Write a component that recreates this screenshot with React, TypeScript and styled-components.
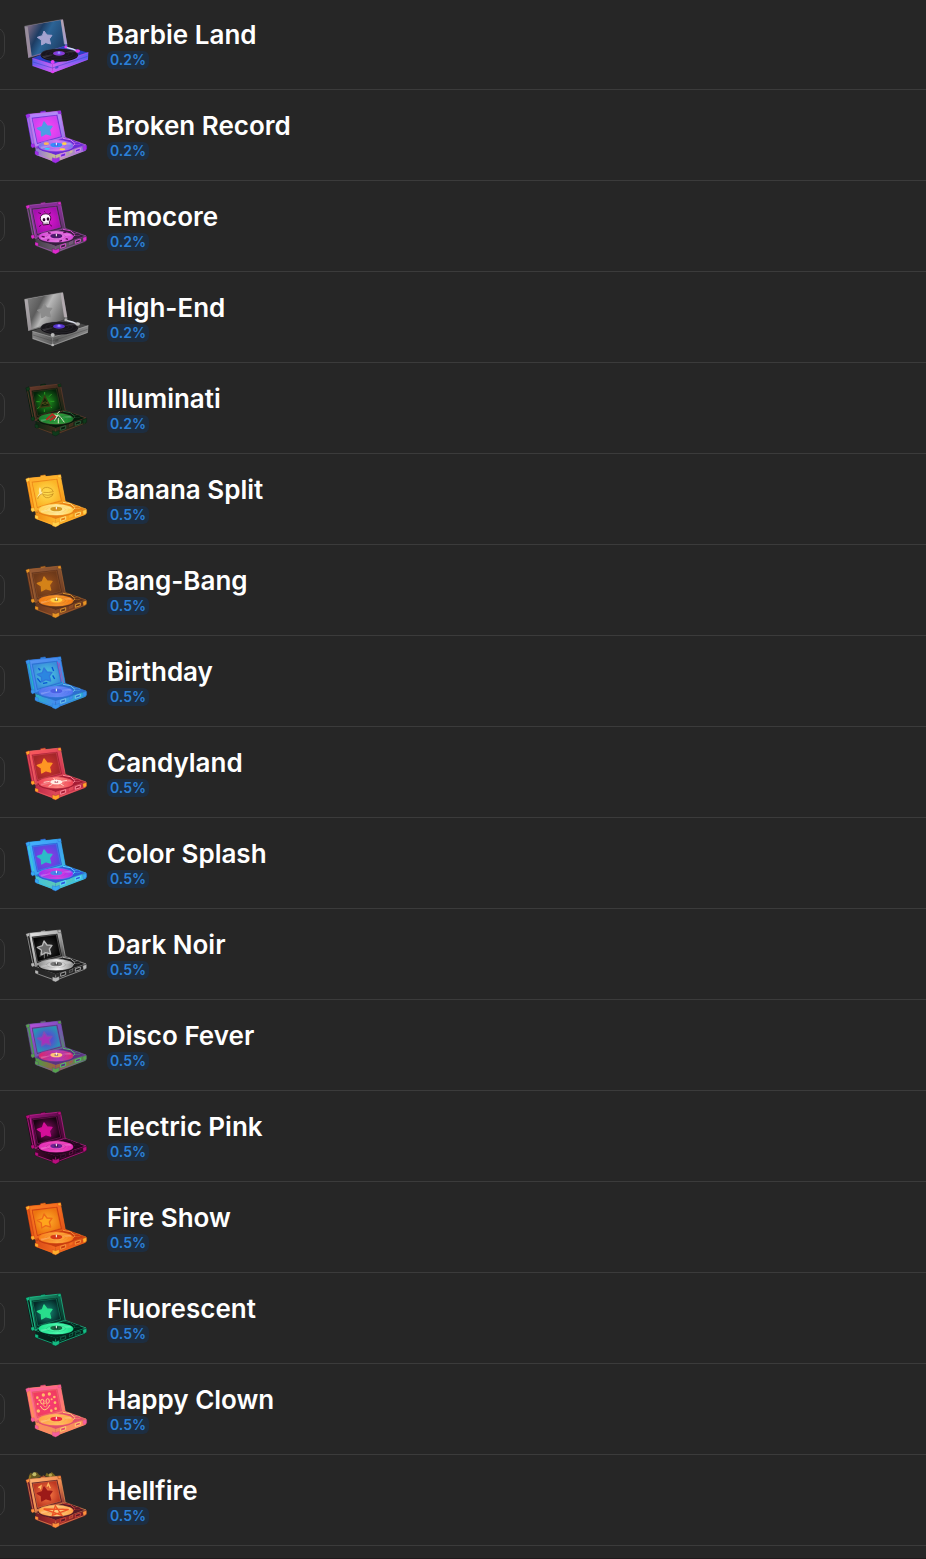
import React, { useId } from "react";
import styled, { createGlobalStyle } from "styled-components";

const GlobalStyle = createGlobalStyle`
  * { box-sizing: border-box; }
  body {
    margin: 0;
    background: #262626;
    color: #ffffff;
    font-family: Inter, "Liberation Sans", sans-serif;
  }
`;

const Panel = styled.main`
  overflow: hidden;
  padding-bottom: 12px;
  border-bottom: 1px solid #1f1a1c;
`;

const BackdropList = styled.ul`
  list-style: none;
  margin: -1px 0 0;
  padding: 0;
`;

const Row = styled.li`
  display: flex;
  align-items: center;
  height: 91px;
  border-bottom: 1px solid #3b3b3b;
`;

const Check = styled.input`
  appearance: none;
  flex: none;
  width: 34px;
  height: 34px;
  margin: 0 10px 0 -29px;
  border: 1px solid #3a3a3a;
  border-radius: 10px;
  &:checked { background: #2481e0; }
`;

const RowLabel = styled.label`
  display: flex;
  flex: 1;
  min-width: 0;
  align-items: center;
  gap: 12px;
`;

const Art = styled.svg`
  display: block;
  flex: none;
  width: 80px;
  height: 70px;
  margin-top: 2px;
`;

const Details = styled.span`
  display: flex;
  flex-direction: column;
  align-items: flex-start;
  min-width: 0;
  margin-bottom: 1px;
`;

const Name = styled.span`
  font-size: 26px;
  line-height: 32px;
  font-weight: 600;
`;

const Rarity = styled.span`
  padding: 0 3px;
  border-radius: 6px;
  background: #1d2d40;
  color: #2b80d8;
  font-size: 14px;
  line-height: 18px;
  font-weight: 600;
`;

type Motif = "star" | "outline" | "skull" | "eye" | "banana" | "clown";
type Extra = "dots" | "bones" | "flames" | "confetti" | "drip" | "candy";

interface Skin {
  frame: string;
  mid?: string;
  frame2: string;
  panel: string;
  panel2: string;
  star: string;
  disc: string;
  disc2: string;
  label: string;
  side: string;
  side2: string;
  corner: string;
  latch: string;
  edge: string;
  motif?: Motif;
  extra?: Extra;
  glass?: boolean;
}

const STAR = "M87 63L96 75L111 76L103 87L107 102L92 98L80 105L79 90L67 82L82 77Z";

function MotifArt({ skin }: { skin: Skin }) {
  switch (skin.motif) {
    case "skull":
      return (
        <g>
          <path d="M70 62l8 3M108 62l-7 4M72 104l7-5M111 103l-6-5M88 58l3 3" stroke="#51064f" strokeWidth="3" />
          <path d="M76 79C75 63 105 60 107 76C108 83 104 87 103 89L103 97L84 99L84 91C79 90 77 86 76 79Z" fill="#fff4ff" stroke="#4a0644" strokeWidth="3" />
          <ellipse cx="87" cy="83" rx="4" ry="5" fill="#280329" />
          <ellipse cx="99" cy="81" rx="4" ry="5" fill="#280329" />
          <path d="M90 92v7M96 91v7" stroke="#280329" strokeWidth="2" />
        </g>
      );
    case "eye":
      return (
        <g fill="none">
          <path d="M89 54v8M70 62l8 8M110 60l-8 8M64 83h10M106 82h12M67 104l9-7M111 102l-8-7M88 106v8" stroke="#299a22" strokeWidth="3" />
          <path d="M89 66L105 96L75 100Z" fill="#102608" stroke="#3c3a16" strokeWidth="4" />
          <path d="M82 88Q90 80 99 87Q90 95 82 88" stroke="#6b5a20" strokeWidth="2" />
        </g>
      );
    case "banana":
      return (
        <g fill="none" stroke="#bf8519" strokeWidth="2">
          <path d="M75 66Q69 74 73 85Q68 91 66 98Q76 88 83 87Z" fill="#ffeaa8" stroke="none" />
          <path d="M80 80Q82 66 98 67Q112 69 115 80Q100 84 85 82M83 86Q86 100 101 98Q114 95 115 84M83 86Q72 88 68 102M85 89Q98 93 114 88" />
        </g>
      );
    case "clown":
      return (
        <g>
          <g fill="#ffbe69">
            <circle cx="67" cy="68" r="4" /><circle cx="85" cy="60" r="5" /><circle cx="103" cy="57" r="5" />
            <circle cx="118" cy="66" r="4" /><circle cx="120" cy="83" r="4" /><circle cx="122" cy="101" r="4" />
            <circle cx="68" cy="87" r="3" /><circle cx="70" cy="108" r="5" /><circle cx="109" cy="107" r="4" />
            <circle cx="73" cy="76" r="3" /><circle cx="110" cy="73" r="3" />
          </g>
          <path d="M76 93Q89 118 105 90" fill="none" stroke="#ffd477" strokeWidth="3" />
          <ellipse cx="82" cy="80" rx="5" ry="7" fill="none" stroke="#ffd477" strokeWidth="3" />
          <ellipse cx="98" cy="78" rx="5" ry="7" fill="none" stroke="#ffd477" strokeWidth="3" />
          <circle cx="91" cy="90" r="5" fill="#f32453" stroke="#ffd477" strokeWidth="2" />
        </g>
      );
    case "outline":
      return <path d={STAR} fill={skin.star} stroke={skin.edge} strokeWidth="4" strokeLinejoin="round" />;
    default:
      return <path d={STAR} fill={skin.star} stroke={skin.star} strokeWidth="4" strokeLinejoin="round" />;
  }
}

function GlassPlayer({ skin, id }: { skin: Skin; id: string }) {
  return (
    <g>
      <path d="M28 49L144 28L158 112L40 144Z" fill={`url(#${id}f)`} />
      <path d="M38 48L137 30L150 107L50 138Z" fill={`url(#${id}p)`} />
      <path d="M29 50L38 50L50 138L40 144Z" fill="#c9bcc6" opacity=".4" />
      <path d="M137 31L144 29L157 102L147 103Z" fill="#e9d9e4" opacity=".5" />
      <path d="M29 48L143 28" stroke="#d8d0d8" opacity=".5" strokeWidth="1" />
      <path d={STAR} fill={skin.star} stroke={skin.star} strokeWidth="3" strokeLinejoin="round" />
      <path d="M52 144L148 108L220 128L113 165Z" fill={skin.frame2} />
      <path d="M52 144L113 163L113 189L52 168Z" fill={`url(#${id}s)`} />
      <path d="M113 163L220 127L219 149L113 189Z" fill={`url(#${id}t)`} />
      <path d="M52 145L113 163L220 128M54 166L113 187L217 148M113 165V187" fill="none" stroke={skin.corner} strokeWidth="2" opacity=".7" />
      <path d="M54 156L112 174L218 139" fill="none" stroke={skin.frame2} strokeWidth="2" opacity=".7" />
      <ellipse cx="133" cy="136" rx="56" ry="19" fill="#141217" />
      <ellipse cx="133" cy="133" rx="55" ry="17" fill={skin.disc} stroke="#4a454e" strokeWidth="1" />
      <ellipse cx="133" cy="132" rx="41" ry="12" fill="none" stroke={skin.disc2} strokeWidth="1" />
      <ellipse cx="133" cy="132" rx="29" ry="8" fill="none" stroke={skin.disc2} strokeWidth="1" />
      <path d="M82 138L120 132L87 145ZM145 128L180 119L186 126Z" fill="#77727a" opacity=".3" />
      <ellipse cx="132" cy="130" rx="18" ry="7" fill={skin.label} />
      <ellipse cx="132" cy="129" rx="8" ry="4" fill="#7455f7" />
      <path d="M132 125v6" stroke="#fff" strokeWidth="2" />
      <path d="M153 112L172 117L191 125" fill="none" stroke="#dce0ed" strokeWidth="4" />
      <circle cx="152" cy="111" r="4" fill={skin.corner} />
      <ellipse cx="188" cy="123" rx="7" ry="5" fill={skin.corner} />
      <ellipse cx="113" cy="156" rx="6" ry="6" fill={skin.corner} />
      <circle cx="113" cy="186" r="4" fill={skin.corner} />
      <path d="M121 170l9-3v7l-9 3z" fill={skin.frame2} opacity=".7" />
    </g>
  );
}

function CasePlayer({ skin, id }: { skin: Skin; id: string }) {
  return (
    <g>
      {skin.extra === "flames" && (
        <g>
          <path d="M41 32Q47 13 52 25Q64 11 72 26L80 31L64 37L45 41Z" fill="#665720" />
          <path d="M90 31L95 20L104 27L110 18L123 31L115 34Z" fill="#77671f" />
          <circle cx="58" cy="25" r="6" fill="#c1bc67" /><circle cx="106" cy="27" r="5" fill="#b9a54e" />
          <path d="M42 40L47 28M84 29L88 38M130 31L137 37" stroke="#987b24" strokeWidth="5" />
        </g>
      )}
      <path d="M77 39V32L91 30V37" fill={skin.corner} stroke={skin.frame2} strokeWidth="2" />
      <path d="M33 43L42 39L135 30L151 111L58 138L50 136Z" fill={skin.frame2} />
      <path d="M42 40L136 30L151 111L60 138Z" fill={`url(#${id}f)`} stroke={skin.edge} strokeWidth="2" />
      <path d="M35 45L42 41L60 136L52 134Z" fill={skin.side} />
      <path d="M37 48L54 132M44 43L61 133" stroke={skin.edge} strokeWidth="2" />
      <path d="M50 50L127 41L141 108L66 129Z" fill={skin.frame2} />
      <path d="M53 53L124 44L137 106L68 125Z" fill={`url(#${id}p)`} stroke={skin.edge} strokeWidth="1" />
      {skin.extra === "confetti" && (
        <g fill="none">
          <path d="M70 64l6 6M111 60l5 12M113 85l6 11M67 94l10 12M84 109l13-2" stroke="#0754d3" strokeWidth="4" />
          <path d="M132 47L146 108M127 44L140 104" stroke="#bb42ae" strokeWidth="2" />
        </g>
      )}
      <MotifArt skin={skin} />
      {skin.extra === "drip" && <path d="M78 96L75 110M88 95V115M97 95L98 109" stroke="#ababab" strokeWidth="2" />}
      {skin.extra === "flames" && <path d="M70 65L78 60L76 70M96 62L100 53L106 67" fill="none" stroke="#ffb65e" strokeWidth="4" />}
      <path d="M59 138L150 109L213 132L122 164Z" fill={skin.frame2} stroke={skin.edge} strokeWidth="2" />
      <path d="M61 140L122 162L121 184L63 162Z" fill={`url(#${id}s)`} />
      <path d="M122 162L213 133L212 149L121 184Z" fill={`url(#${id}t)`} />
      <path d="M63 160L121 181L211 147M122 166V181" fill="none" stroke={skin.edge} strokeWidth="2" />
      <ellipse cx="123" cy="138" rx="53" ry="18" fill={skin.frame2} />
      <ellipse cx="123" cy="134" rx="52" ry="17" fill={`url(#${id}d)`} stroke={skin.edge} strokeWidth="1" />
      <ellipse cx="123" cy="134" rx="39" ry="12" fill="none" stroke={skin.edge} opacity=".45" strokeWidth="1" />
      <ellipse cx="123" cy="134" rx="29" ry="9" fill="none" stroke={skin.frame2} opacity=".4" strokeWidth="1" />
      <path d="M76 137L111 133L80 143ZM136 130L166 125L170 131Z" fill="#fff" opacity=".22" />
      {skin.extra === "dots" && (
        <g>
          <ellipse cx="94" cy="128" rx="8" ry="4" fill="#ffb557" />
          <ellipse cx="148" cy="128" rx="7" ry="4" fill="#ffd34c" />
          <ellipse cx="97" cy="143" rx="8" ry="3" fill="#35ceff" />
          <ellipse cx="142" cy="145" rx="9" ry="3" fill="#ffd34c" />
        </g>
      )}
      {skin.extra === "bones" && <path d="M80 133l9 2M96 145l7-2M133 148l8-3M152 140l7 2M99 122l8 2M145 122l9-2" stroke="#5c0757" strokeWidth="4" />}
      {skin.extra === "candy" && <path d="M86 133L104 130M101 145L112 139M146 143L137 138M156 127L140 130M116 120L119 126" stroke="#ffd0c4" strokeWidth="3" />}
      {skin.extra !== "flames" && (
        <g>
          <ellipse cx="124" cy="132" rx="18" ry="7" fill={skin.label} />
          <ellipse cx="124" cy="132" rx="6" ry="3" fill={skin.frame2} opacity=".65" />
          <path d="M124 125v8" stroke="#fff" strokeWidth="3" />
        </g>
      )}
      {skin.extra === "flames" && <path d="M86 129L161 130L112 148L121 119L141 148Z" fill="none" stroke="#ed5324" strokeWidth="4" />}
      {skin.motif === "eye" && (
        <g fill="none">
          <path d="M94 137L112 121L121 128L104 139" stroke="#b52d22" strokeWidth="6" />
          <path d="M118 140L129 122L137 130L148 145M127 119L134 111M128 127L119 122M130 132L130 148" stroke="#d5e6bd" strokeWidth="3" />
        </g>
      )}
      <path d="M147 113L171 121L188 129" fill="none" stroke={skin.frame2} strokeWidth="8" />
      <path d="M144 112L166 116L181 128L174 134" fill="none" stroke={skin.latch} strokeWidth="3" />
      <ellipse cx="187" cy="127" rx="9" ry="4" fill={skin.frame2} stroke={skin.latch} strokeWidth="1" />
      <g fill={skin.frame2} stroke={skin.latch} strokeWidth="3">
        <path d="M137 160l15-5v9l-15 5zM181 146l15-5v8l-15 5z" />
      </g>
      <path d="M163 151l10-4v7l-10 4z" fill={skin.side2} stroke={skin.edge} strokeWidth="1" />
      <g fill={skin.corner} stroke={skin.frame2} strokeWidth="1">
        <path d="M32 42L42 38L45 46L36 52ZM128 31L137 29L139 38L130 38ZM48 130l9-2 3 9-8 4-4-5ZM60 150l10 3v10l-10-3zM112 170l10 3 11-4v11l-11 6-10-4zM203 137l12-4v12l-10 5z" />
      </g>
    </g>
  );
}

function Turntable({ skin }: { skin: Skin }) {
  const id = "t" + useId().replace(/[^a-zA-Z0-9]/g, "");
  return (
    <Art viewBox="0 0 240 210" aria-hidden="true">
      <defs>
        <linearGradient id={`${id}f`} x1="0" y1="0" x2="1" y2="1">
          <stop stopColor={skin.frame} /><stop offset=".5" stopColor={skin.mid ?? skin.side2} /><stop offset="1" stopColor={skin.side} />
        </linearGradient>
        {skin.glass ? (
          <linearGradient id={`${id}p`} x1="0" y1=".2" x2="1" y2=".7">
            <stop stopColor={skin.mid} /><stop offset=".3" stopColor={skin.panel2} /><stop offset=".5" stopColor={skin.panel} /><stop offset="1" stopColor={skin.panel2} />
          </linearGradient>
        ) : (
          <radialGradient id={`${id}p`}><stop stopColor={skin.panel} /><stop offset="1" stopColor={skin.panel2} /></radialGradient>
        )}
        <linearGradient id={`${id}s`}><stop stopColor={skin.side} /><stop offset="1" stopColor={skin.side2} /></linearGradient>
        <linearGradient id={`${id}t`}><stop stopColor={skin.side2} /><stop offset="1" stopColor={skin.side} /></linearGradient>
        <linearGradient id={`${id}d`}><stop stopColor={skin.disc} /><stop offset=".55" stopColor={skin.disc2} /><stop offset="1" stopColor={skin.disc} /></linearGradient>
      </defs>
      {skin.glass ? <GlassPlayer skin={skin} id={id} /> : <CasePlayer skin={skin} id={id} />}
    </Art>
  );
}

const models: { name: string; rarity: string; skin: Skin }[] = [
  { name: "Barbie Land", rarity: "0.2%", skin: { glass: true, frame: "#777481", mid: "#7d6a83", frame2: "#293fc4", panel: "#2c6496", panel2: "#1d3c63", star: "#a4a3d0", disc: "#19151e", disc2: "#343039", label: "#863bd4", side: "#5a5ff0", side2: "#c864f4", corner: "#e33df4", latch: "#b4caff", edge: "#737584" } },
  { name: "Broken Record", rarity: "0.2%", skin: { frame: "#b37cff", mid: "#b18cf6", frame2: "#6a2bd6", panel: "#ff46f2", panel2: "#d040f0", star: "#4c9ce6", disc: "#6f78ec", disc2: "#db78f1", label: "#328dfa", side: "#8f6ce0", side2: "#c9c28f", corner: "#a42ce5", latch: "#d884f0", edge: "#c76de7", extra: "dots" } },
  { name: "Emocore", rarity: "0.2%", skin: { frame: "#813092", mid: "#8c2b9c", frame2: "#36203d", panel: "#e019d0", panel2: "#a60fae", star: "#fff", disc: "#d844d8", disc2: "#ef7be7", label: "#4d176e", side: "#444048", side2: "#6b5b6e", corner: "#de29cd", latch: "#d84fd0", edge: "#a755b6", motif: "skull", extra: "bones" } },
  { name: "High-End", rarity: "0.2%", skin: { glass: true, frame: "#aaaaaa", mid: "#7a7a7a", frame2: "#454545", panel: "#b8b8b8", panel2: "#5c5c5c", star: "#8c8c8c", disc: "#17161a", disc2: "#39383d", label: "#5735c9", side: "#858585", side2: "#5c5c5c", corner: "#b9b9b9", latch: "#dddddd", edge: "#a5a5a5" } },
  { name: "Illuminati", rarity: "0.2%", skin: { frame: "#6b3a2c", mid: "#3a2a1c", frame2: "#071a0c", panel: "#209a20", panel2: "#05240a", star: "#163113", disc: "#117b2c", disc2: "#2fa940", label: "#34713c", side: "#0d2413", side2: "#3c2c1c", corner: "#0f3a1b", latch: "#2c5c38", edge: "#6e4030", motif: "eye" } },
  { name: "Banana Split", rarity: "0.5%", skin: { frame: "#ffab2d", frame2: "#e88114", panel: "#ffdf52", panel2: "#fbb527", star: "#f9c545", disc: "#ffd254", disc2: "#fff1a9", label: "#d39922", side: "#ef8a12", side2: "#ffb62b", corner: "#ffd14d", latch: "#ffe17b", edge: "#ffb332", motif: "banana" } },
  { name: "Bang-Bang", rarity: "0.5%", skin: { frame: "#995b33", mid: "#84502f", frame2: "#5b301a", panel: "#98501e", panel2: "#6d3919", star: "#d48218", disc: "#f37910", disc2: "#ffa02f", label: "#ffcf42", side: "#66351d", side2: "#8a4a24", corner: "#e89525", latch: "#dc952f", edge: "#a66231" } },
  { name: "Birthday", rarity: "0.5%", skin: { frame: "#5894f1", frame2: "#2c6fd0", panel: "#4fd0dc", panel2: "#3a8fdc", star: "#2b86e0", disc: "#5173ef", disc2: "#6f8cfa", label: "#4c60e4", side: "#29b0ca", side2: "#458bef", corner: "#3993ec", latch: "#70c5e9", edge: "#2f78dc", motif: "outline", extra: "confetti" } },
  { name: "Candyland", rarity: "0.5%", skin: { frame: "#ff5b5d", frame2: "#a61d35", panel: "#d4382f", panel2: "#a4262a", star: "#ff9623", disc: "#ee4052", disc2: "#ff8a83", label: "#fff0e7", side: "#bf2a48", side2: "#e0485a", corner: "#ffa629", latch: "#ff8c9c", edge: "#ef6664", extra: "candy" } },
  { name: "Color Splash", rarity: "0.5%", skin: { frame: "#45b4ff", mid: "#3f9cf2", frame2: "#2f5ad8", panel: "#a62fe7", panel2: "#514cdf", star: "#2cbcc8", disc: "#9e31ee", disc2: "#e733dc", label: "#4c85e9", side: "#3fc4dc", side2: "#5cc8b8", corner: "#37acf2", latch: "#59dbff", edge: "#31b5f2" } },
  { name: "Dark Noir", rarity: "0.5%", skin: { frame: "#eeeeee", mid: "#a8a8a8", frame2: "#1c1c1c", panel: "#303030", panel2: "#030303", star: "#6c6c6c", disc: "#8a8a8a", disc2: "#fafafa", label: "#777777", side: "#242424", side2: "#2c2c2c", corner: "#b8b8b8", latch: "#a5a5a5", edge: "#b8b8b8", motif: "outline", extra: "drip" } },
  { name: "Disco Fever", rarity: "0.5%", skin: { frame: "#c050dc", mid: "#7a4ec0", frame2: "#5a3480", panel: "#6f27df", panel2: "#2794b4", star: "#a531bb", disc: "#dd2468", disc2: "#b440c0", label: "#ffc477", side: "#479d4a", side2: "#a0603f", corner: "#56a34d", latch: "#55bd72", edge: "#7a52b4", motif: "outline" } },
  { name: "Electric Pink", rarity: "0.5%", skin: { frame: "#9d127c", mid: "#5c0c48", frame2: "#25051e", panel: "#8a0a68", panel2: "#160510", star: "#d40f99", disc: "#e22ab4", disc2: "#f352c4", label: "#6a2291", side: "#46072e", side2: "#1c0514", corner: "#b90d7e", latch: "#3c1134", edge: "#d0229c" } },
  { name: "Fire Show", rarity: "0.5%", skin: { frame: "#fa7e20", frame2: "#c83c10", panel: "#ffb12b", panel2: "#ed7410", star: "#ffa51c", disc: "#f87d19", disc2: "#ffb144", label: "#d83a18", side: "#d84b17", side2: "#f46a20", corner: "#ffae2d", latch: "#f89438", edge: "#ee6a18", motif: "outline" } },
  { name: "Fluorescent", rarity: "0.5%", skin: { frame: "#1fa878", mid: "#0e5c48", frame2: "#03231c", panel: "#16907a", panel2: "#052a29", star: "#28dd8c", disc: "#1be08a", disc2: "#50ffb0", label: "#176841", side: "#07251e", side2: "#042018", corner: "#14bb83", latch: "#126048", edge: "#20d49a" } },
  { name: "Happy Clown", rarity: "0.5%", skin: { frame: "#ff60a0", mid: "#ff6a84", frame2: "#e2506a", panel: "#fb397a", panel2: "#f03c60", star: "#ffc36a", disc: "#ffa044", disc2: "#ffc95d", label: "#ed2945", side: "#ff8c5c", side2: "#f3905c", corner: "#f4609e", latch: "#ffd06f", edge: "#ff866e", motif: "clown" } },
  { name: "Hellfire", rarity: "0.5%", skin: { frame: "#ffb878", mid: "#f28c50", frame2: "#581a26", panel: "#ff8148", panel2: "#bd3721", star: "#9c1a18", disc: "#ffa040", disc2: "#ffd181", label: "#ef5927", side: "#701a26", side2: "#b03028", corner: "#ff913c", latch: "#c8443a", edge: "#ef9754", extra: "flames" } },
];

export default function App() {
  return (
    <>
      <GlobalStyle />
      <Panel>
        <BackdropList>
          {models.map(({ name, rarity, skin }, index) => (
            <Row key={name}>
              <Check type="checkbox" id={`model-${index}`} />
              <RowLabel htmlFor={`model-${index}`}>
                <Turntable skin={skin} />
                <Details>
                  <Name>{name}</Name>
                  <Rarity>{rarity}</Rarity>
                </Details>
              </RowLabel>
            </Row>
          ))}
        </BackdropList>
      </Panel>
    </>
  );
}
